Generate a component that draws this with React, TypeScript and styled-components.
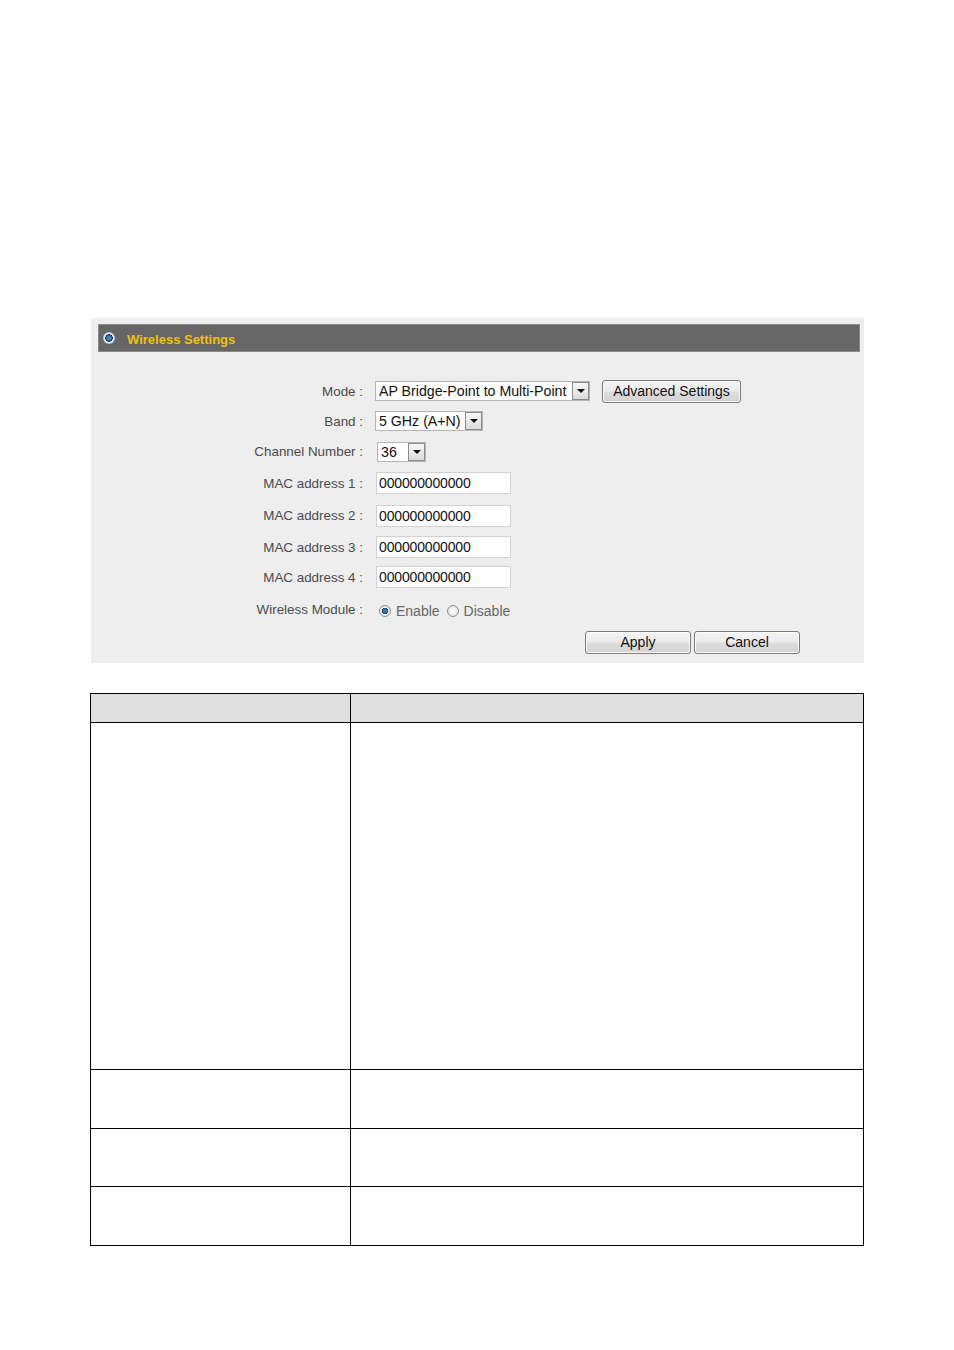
import React from "react";
import styled, { createGlobalStyle } from "styled-components";

const Global = createGlobalStyle`
  html, body { margin: 0; padding: 0; background: #fff; }
  body { font-family: "Liberation Sans", Arial, sans-serif; }
`;

const Page = styled.div`
  width: 954px;
  height: 1350px;
  padding-top: 318px;
  box-sizing: border-box;
`;

const Panel = styled.section`
  margin-left: 91px;
  width: 773px;
  height: 345px;
  background: #eeeeee;
  padding: 6px 4px 0 7px;
  box-sizing: border-box;
`;

const HeaderBar = styled.div`
  height: 28px;
  background: #666666;
  border: 1px solid #8a8a8a;
  box-sizing: border-box;
  display: flex;
  align-items: center;
  padding-left: 4px;
  gap: 12px;
`;

const HeaderDot = styled.span`
  width: 12px;
  height: 12px;
  border-radius: 50%;
  margin-top: -1px;
  background: radial-gradient(circle, #3a86c8 0 1.5px, #1d4f82 3px, #0e2a48 3.5px, #f4f6f8 4px, #b8bcc0 6px);
  flex: none;
`;

const Title = styled.h2`
  margin: 0;
  font-size: 13px;
  font-weight: bold;
  color: #f2c200;
  padding-top: 2px;
`;

const Form = styled.div`
  margin-top: 24px;
  display: flex;
  flex-direction: column;
`;

const Row = styled.div<{ $h: number }>`
  height: ${(p) => p.$h}px;
  display: grid;
  grid-template-columns: 265px 1fr;
  column-gap: 12px;
  align-items: center;
`;

const Label = styled.div`
  text-align: right;
  font-size: 13.4px;
  color: #4a4a4a;
  white-space: nowrap;
`;

const Controls = styled.div<{ $offset?: number }>`
  display: flex;
  align-items: center;
  gap: 12px;
  padding-left: ${(p) => p.$offset ?? 0}px;
`;

const SelectBox = styled.div<{ $w: number }>`
  width: ${(p) => p.$w}px;
  height: 20px;
  background: #fff;
  border: 1px solid #b5b5b5;
  box-sizing: border-box;
  display: flex;
  align-items: stretch;
`;

const SelectText = styled.span`
  flex: 1;
  font-size: 14.2px;
  color: #111;
  padding-left: 3px;
  line-height: 18px;
  white-space: nowrap;
  overflow: hidden;
`;

const SelectArrow = styled.span`
  width: 17px;
  margin: 0;
  border: 1px solid #8a8a8a;
  box-sizing: border-box;
  background: linear-gradient(#f8f8f8, #dadada);
  display: flex;
  align-items: center;
  justify-content: center;
  &::after {
    content: "";
    border-left: 4px solid transparent;
    border-right: 4px solid transparent;
    border-top: 4px solid #111;
  }
`;

const TextInput = styled.div`
  width: 135px;
  height: 22px;
  background: #fff;
  border: 1px solid #d2d2d2;
  box-sizing: border-box;
  font-size: 14px;
  color: #111;
  padding-left: 2px;
  line-height: 20px;
  letter-spacing: -0.15px;
`;

const Button = styled.div<{ $w: number }>`
  width: ${(p) => p.$w}px;
  height: 23px;
  box-sizing: border-box;
  border: 1px solid #7a7a7a;
  border-radius: 3px;
  background: linear-gradient(#f4f4f4 0%, #ececec 45%, #dddddd 55%, #d2d2d2 100%);
  box-shadow: inset 0 0 0 1px #fbfbfb;
  font-size: 14px;
  color: #111;
  display: flex;
  align-items: center;
  justify-content: center;
`;

const RadioGroup = styled.div`
  display: flex;
  align-items: center;
  padding-left: 4px;
  padding-top: 4px;
  font-size: 14px;
  color: #666;
`;

const Radio = styled.span<{ $on?: boolean }>`
  width: 12px;
  height: 12px;
  border-radius: 50%;
  box-sizing: border-box;
  border: 1px solid #8e8f8f;
  margin-right: 5px;
  flex: none;
  background: ${(p) =>
    p.$on
      ? "radial-gradient(circle, #2e78bc 0 1.5px, #14457a 3px, #f4f4f4 3.5px, #dcdcdc 5.5px)"
      : "radial-gradient(circle, #f8f8f8 0 2px, #dedede 5.5px)"};
`;

const RadioText = styled.span`
  margin-right: 7px;
`;

const ButtonRow = styled.div`
  height: 32px;
  display: flex;
  align-items: center;
  gap: 3px;
  padding-left: 487px;
`;

const Table = styled.div`
  margin: 30px 0 0 90px;
  width: 774px;
  display: grid;
  grid-template-columns: 260px 1fr;
  grid-template-rows: 29px 347px 59px 58px 59px;
  border-top: 1px solid #000;
  border-left: 1px solid #000;
  box-sizing: border-box;
`;

const Cell = styled.div<{ $head?: boolean }>`
  border-right: 1px solid #000;
  border-bottom: 1px solid #000;
  background: ${(p) => (p.$head ? "#e0e0e0" : "#fff")};
`;

const Select = ({ w, text }: { w: number; text: string }) => (
  <SelectBox $w={w}>
    <SelectText>{text}</SelectText>
    <SelectArrow />
  </SelectBox>
);

const macs = [1, 2, 3, 4];
const macHeights = [32, 33, 30, 30];

export default function App() {
  return (
    <Page>
      <Global />
      <Panel>
        <HeaderBar>
          <HeaderDot />
          <Title>Wireless Settings</Title>
        </HeaderBar>
        <Form>
          <Row $h={30}>
            <Label>Mode :</Label>
            <Controls>
              <Select w={215} text="AP Bridge-Point to Multi-Point" />
              <Button $w={139}>Advanced Settings</Button>
            </Controls>
          </Row>
          <Row $h={30}>
            <Label>Band :</Label>
            <Controls>
              <Select w={108} text="5 GHz (A+N)" />
            </Controls>
          </Row>
          <Row $h={31}>
            <Label>Channel Number :</Label>
            <Controls $offset={2}>
              <Select w={49} text="36" />
            </Controls>
          </Row>
          {macs.map((n, i) => (
            <Row $h={macHeights[i]} key={n}>
              <Label>MAC address {n} :</Label>
              <Controls $offset={1}>
                <TextInput>000000000000</TextInput>
              </Controls>
            </Row>
          ))}
          <Row $h={34}>
            <Label>Wireless Module :</Label>
            <RadioGroup>
              <Radio $on />
              <RadioText>Enable</RadioText>
              <Radio />
              <RadioText>Disable</RadioText>
            </RadioGroup>
          </Row>
          <ButtonRow>
            <Button $w={106}>Apply</Button>
            <Button $w={106}>Cancel</Button>
          </ButtonRow>
        </Form>
      </Panel>
      <Table>
        <Cell $head />
        <Cell $head />
        <Cell />
        <Cell />
        <Cell />
        <Cell />
        <Cell />
        <Cell />
        <Cell />
        <Cell />
      </Table>
    </Page>
  );
}
